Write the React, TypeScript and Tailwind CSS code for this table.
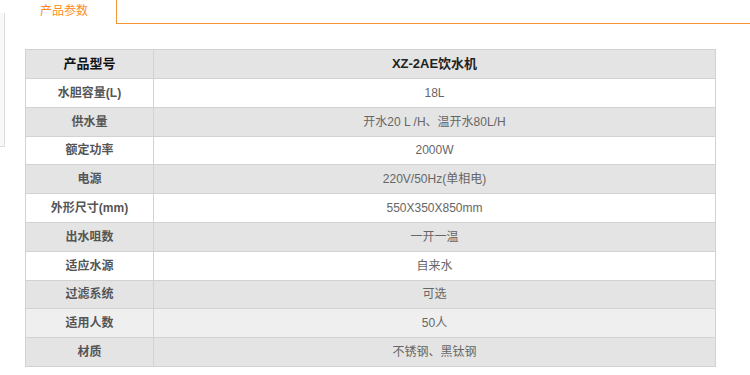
import React from "react";

const rows: { k: string; v: string; bg: string }[] = [
  { k: "水胆容量(L)", v: "18L", bg: "bg-white" },
  { k: "供水量", v: "开水20 L /H、温开水80L/H", bg: "bg-[#e4e4e4]" },
  { k: "额定功率", v: "2000W", bg: "bg-white" },
  { k: "电源", v: "220V/50Hz(单相电)", bg: "bg-[#e4e4e4]" },
  { k: "外形尺寸(mm)", v: "550X350X850mm", bg: "bg-white" },
  { k: "出水咀数", v: "一开一温", bg: "bg-[#e4e4e4]" },
  { k: "适应水源", v: "自来水", bg: "bg-white" },
  { k: "过滤系统", v: "可选", bg: "bg-[#e4e4e4]" },
  { k: "适用人数", v: "50人", bg: "bg-[#efefef]" },
  { k: "材质", v: "不锈钢、黑钛钢", bg: "bg-[#e4e4e4]" },
];

export default function App() {
  return (
    <div
      className="relative w-[750px] h-[375px] bg-white overflow-hidden"
      style={{ fontFamily: '"Liberation Sans", "Noto Sans CJK SC", sans-serif' }}
    >
      <div className="absolute left-0 top-[13px] w-[5px] h-[134px] bg-[#f8f8f8] border-r border-b border-[#dddddd]" />
      <div className="flex h-[24px]">
        <div className="w-[116px] flex items-start pl-[40px] pt-[4px] text-[12px] leading-[14px] text-[#ff8c1a]">
          产品参数
        </div>
        <div className="flex-1 border-l border-b border-[#f39530]" />
      </div>
      <div className="ml-[25px] mt-[25px] w-[691px]">
        <table className="w-full border-collapse border border-[#d6d6d6] text-[12px]">
          <colgroup>
            <col className="w-[128px]" />
            <col />
          </colgroup>
          <tbody>
            <tr className="bg-[#e4e4e4] h-[29px]">
              <td className="border border-[#d2d2d2] text-center font-bold text-[13px] text-[#111]">产品型号</td>
              <td className="border border-[#d2d2d2] text-center font-bold text-[13px] text-[#222]">XZ-2AE饮水机</td>
            </tr>
            {rows.map((r) => (
              <tr key={r.k} className={`${r.bg} h-[28.8px]`}>
                <td className="border border-[#d2d2d2] text-center font-bold text-[#555]">{r.k}</td>
                <td className="border border-[#d2d2d2] text-center text-[#666]">{r.v}</td>
              </tr>
            ))}
          </tbody>
        </table>
      </div>
    </div>
  );
}
